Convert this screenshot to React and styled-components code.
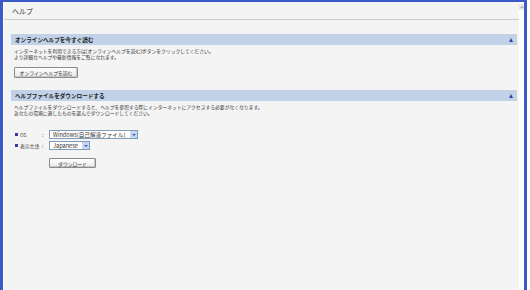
import React from "react";
import styled, { createGlobalStyle } from "styled-components";

const GlobalStyle = createGlobalStyle`
  html, body {
    margin: 0;
    padding: 0;
    background: #ffffff;
    width: 530px;
    height: 290px;
    overflow: hidden;
  }
  body {
    font-family: "Noto Sans CJK JP", "Liberation Sans", sans-serif;
    color: #222;
  }
`;

const Window = styled.div`
  width: 521px;
  height: 288px;
  border-top: 2px solid #3a5bc7;
  border-left: 3px solid #3a5bc7;
  border-right: 3px solid #3a5bc7;
  display: flex;
`;

const Content = styled.div`
  flex: 1;
  background: #f3f4f3;
  border-left: 1px solid #ffffff;
  display: flex;
  flex-direction: column;
`;

const Scrollbar = styled.div`
  width: 5px;
  background: #ffffff;
  display: flex;
  flex-direction: column;
  align-items: center;
  padding-top: 2px;
`;

const ScrollArrow = styled.div`
  width: 5px;
  height: 6px;
  background: #e4e6e8;
  display: flex;
  align-items: center;
  justify-content: center;
  &::after {
    content: "";
    border-left: 2px solid transparent;
    border-right: 2px solid transparent;
    border-bottom: 2px solid #b4b8bc;
  }
`;

const Header = styled.div`
  height: 17px;
  border-bottom: 1px solid #c9cac9;
  padding-left: 8px;
  display: flex;
  align-items: center;
  font-size: 7px;
  color: #333;
`;

const Sections = styled.div`
  padding: 14px 2px 0 7px;
  display: flex;
  flex-direction: column;
`;

const Band = styled.div`
  height: 11px;
  margin-top: ${(p) => p.$top || 0}px;
  background: #c1d1e8;
  display: flex;
  align-items: center;
  justify-content: space-between;
  padding: 0 4px 0 4px;
  font-size: 5.6px;
  font-weight: bold;
  color: #1c1c1c;
`;

const Arrow = styled.span`
  width: 0;
  height: 0;
  border-left: 2.5px solid transparent;
  border-right: 2.5px solid transparent;
  border-bottom: 4px solid #30479a;
`;

const Para = styled.p`
  margin: 3px 0 0 3px;
  font-size: 4.8px;
  line-height: 6px;
  color: #333;
`;

const Button = styled.button`
  font-family: inherit;
  font-size: 4.8px;
  color: #333;
  height: ${(p) => p.$h || 11}px;
  width: ${(p) => p.$w}px;
  margin: ${(p) => p.$margin};
  padding: 0;
  border: 1px solid #8b8b8b;
  border-radius: 1px;
  background: linear-gradient(#ffffff, #e9e9e9);
  box-shadow: inset -1px -1px 0 #c8c8c8;
  display: flex;
  align-items: center;
  justify-content: center;
`;

const Form = styled.div`
  margin: 14px 0 0 4px;
  display: grid;
  grid-template-columns: 27px 7px auto;
  row-gap: 2px;
  align-items: center;
  justify-items: start;
  font-size: 4.8px;
  color: #333;
`;

const Label = styled.span`
  display: flex;
  align-items: center;
  gap: 2px;
  &::before {
    content: "";
    width: 3px;
    height: 3px;
    background: #2c3f9c;
  }
`;

const Colon = styled.span``;

const Select = styled.div`
  height: 9px;
  width: ${(p) => p.$w}px;
  box-sizing: border-box;
  border: 1px solid #7f9db9;
  background: #ffffff;
  display: flex;
  align-items: center;
  justify-content: space-between;
  padding-left: 3px;
  font-size: 5.6px;
  color: #333;
`;

const DropButton = styled.span`
  width: 7px;
  height: 7px;
  background: #c6d5f5;
  display: flex;
  align-items: center;
  justify-content: center;
  &::after {
    content: "";
    border-left: 2px solid transparent;
    border-right: 2px solid transparent;
    border-top: 2px solid #4d6185;
  }
`;

export default function App() {
  return (
    <>
      <GlobalStyle />
      <Window>
        <Content>
          <Header>ヘルプ</Header>
          <Sections>
            <Band>
              オンラインヘルプを今すぐ読む
              <Arrow />
            </Band>
            <Para>
              インターネットを利用できる方は[オンラインヘルプを読む]ボタンをクリックしてください。
              <br />
              より詳細なヘルプや最新情報をご覧になれます。
            </Para>
            <Button $w={64} $margin="7px 0 0 3px">
              オンラインヘルプを読む
            </Button>
            <Band $top={12}>
              ヘルプファイルをダウンロードする
              <Arrow />
            </Band>
            <Para>
              ヘルプファイルをダウンロードすると、ヘルプを参照する際にインターネットにアクセスする必要がなくなります。
              <br />
              あなたの環境に適したものを選んでダウンロードしてください。
            </Para>
            <Form>
              <Label>OS</Label>
              <Colon>:</Colon>
              <Select $w={89}>
                Windows(自己解凍ファイル)
                <DropButton />
              </Select>
              <Label>表示言語</Label>
              <Colon>:</Colon>
              <Select $w={41}>
                Japanese
                <DropButton />
              </Select>
            </Form>
            <Button $w={47} $h={10} $margin="8px 0 0 38px">
              ダウンロード
            </Button>
          </Sections>
        </Content>
        <Scrollbar>
          <ScrollArrow />
        </Scrollbar>
      </Window>
    </>
  );
}
